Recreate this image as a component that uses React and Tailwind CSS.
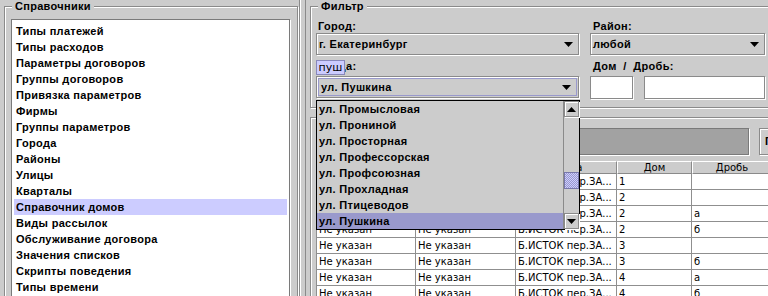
import React from 'react';

const etched = 'border border-[#8a8a8a] shadow-[inset_1px_1px_0_#ffffff,1px_1px_0_#ffffff]';
const bold = "font-bold font-['Liberation_Sans',sans-serif] text-[11px] tracking-[0.3px]";

const refs = [
  'Типы платежей',
  'Типы расходов',
  'Параметры договоров',
  'Группы договоров',
  'Привязка параметров',
  'Фирмы',
  'Группы параметров',
  'Города',
  'Районы',
  'Улицы',
  'Кварталы',
  'Справочник домов',
  'Виды рассылок',
  'Обслуживание договора',
  'Значения списков',
  'Скрипты поведения',
  'Типы времени',
];

const streets = [
  'ул. Промысловая',
  'ул. Прониной',
  'ул. Просторная',
  'ул. Профессорская',
  'ул. Профсоюзная',
  'ул. Прохладная',
  'ул. Птицеводов',
  'ул. Пушкина',
];

const houses = [
  ['1', ''],
  ['2', ''],
  ['2', 'а'],
  ['2', 'б'],
  ['3', ''],
  ['3', 'б'],
  ['4', 'а'],
  ['4', 'б'],
];

function Arrow({ up }) {
  return (
    <svg width="9" height="5" viewBox="0 0 9 5">
      {up ? <polygon points="0,5 9,5 4.5,0" fill="#000" /> : <polygon points="0,0 9,0 4.5,5" fill="#000" />}
    </svg>
  );
}

function Titled({ title, className, children }) {
  return (
    <div className={`relative ${etched} ${className}`}>
      <span className={`absolute -top-[8px] left-[7px] px-[3px] bg-[#cccccc] leading-[14px] ${bold}`}>{title}</span>
      {children}
    </div>
  );
}

function Combo({ text, focused }) {
  return (
    <div className={`h-[22px] ${etched} flex`}>
      <div className={`flex-1 flex items-center ${focused ? 'border border-[#9999cc] m-[1px]' : ''}`}>
        <div className={`flex-1 pl-[2px] ${bold}`}>{text}</div>
        <div className="w-[19px] flex justify-center">
          <Arrow />
        </div>
      </div>
    </div>
  );
}

function ScrollButton({ up }) {
  return (
    <div className={`h-[16px] w-[15px] ${etched} flex items-center justify-center`}>
      <Arrow up={up} />
    </div>
  );
}

export default function App() {
  return (
    <div className="w-[768px] h-[296px] overflow-hidden bg-[#cccccc] flex relative text-[10px] text-black font-['DejaVu_Sans',sans-serif]">
      {/* Справочники */}
      <div className="w-[298px] shrink-0 pl-[4px] pt-[6px]">
        <Titled title="Справочники" className="w-[294px] h-[310px] pt-[12px] pl-[6px] pr-[7px]">
          <div className="bg-white border border-[#7a7a7a] shadow-[1px_1px_0_#ffffff] h-[300px] pt-[3px] px-[2px]">
            {refs.map((r, i) => (
              <div key={r} className={`h-[16px] leading-[16px] px-[2px] ${bold} ${i === 11 ? 'bg-[#ccccff]' : ''}`}>
                {r}
              </div>
            ))}
          </div>
        </Titled>
      </div>

      {/* splitter */}
      <div className="w-[8px] shrink-0 flex">
        <div className="w-[2px] border-l border-[#8a8a8a] bg-white ml-[1px]" />
        <div className="flex-1" />
        <div className="w-[1px] bg-[#8a8a8a]" />
      </div>

      {/* right side */}
      <div className="flex-1 pt-[6px] flex flex-col">
        <Titled title="Фильтр" className="ml-[4px] w-[480px] h-[102px] shrink-0 pt-[13px] pl-[5px]">
          <div className="flex gap-[11px]">
            <div className="w-[263px] shrink-0">
              <div className={`h-[13px] leading-[13px] pl-[2px] ${bold}`}>Город:</div>
              <Combo text="г. Екатеринбург" />
              <div className={`h-[13px] leading-[13px] pl-[2px] mt-[5px] mb-[3px] ${bold}`}>Улица:</div>
              <Combo text="ул. Пушкина" focused />
            </div>
            <div className="w-[175px] shrink-0">
              <div className={`h-[13px] leading-[13px] pl-[3px] ${bold}`}>Район:</div>
              <Combo text="любой" />
              <div className={`h-[13px] leading-[13px] pl-[3px] mt-[5px] mb-[3px] whitespace-pre ${bold}`}>
                Дом  /  Дробь:
              </div>
              <div className="flex gap-[11px]">
                <div className={`w-[43px] shrink-0 h-[23px] bg-white ${etched}`} />
                <div className={`w-[121px] shrink-0 h-[23px] bg-white ${etched}`} />
              </div>
            </div>
          </div>
        </Titled>

        <div className={`ml-[4px] mt-[9px] w-[480px] h-[200px] shrink-0 ${etched} pt-[10px] pl-[5px]`}>
          <div className="flex">
            <div className="w-[433px] shrink-0 h-[27px] bg-[#a2a2a2] border border-[#7a7a7a] shadow-[1px_1px_0_#ffffff]" />
            <div className={`ml-[10px] w-[70px] shrink-0 h-[27px] ${etched} flex items-center pl-[5px] ${bold}`}>
              Поиск
            </div>
          </div>
          <div className="mt-[6px]">
            <div className="flex h-[13px] leading-[12px]">
              {[
                ['Город', 'w-[100px]'],
                ['Район', 'w-[100px]'],
                ['Улица', 'w-[101px]'],
                ['Дом', 'w-[75px]'],
                ['Дробь', 'w-[80px]'],
              ].map(([h, w]) => (
                <div
                  key={h}
                  className={`${w} shrink-0 text-center bg-[#cccccc] border-t border-l border-t-white border-l-white border-r border-b border-r-[#8a8a8a] border-b-[#8a8a8a]`}
                >
                  {h}
                </div>
              ))}
            </div>
            {houses.map(([d, f], i) => (
              <div key={i} className="flex h-[16px] leading-[15px] bg-white">
                <div className="w-[100px] shrink-0 border-l border-r border-b border-[#8f8f8f] px-[2px]">Не указан</div>
                <div className="w-[100px] shrink-0 border-r border-b border-[#8f8f8f] px-[2px]">Не указан</div>
                <div className="w-[101px] shrink-0 border-r border-b border-[#8f8f8f] px-[2px] whitespace-nowrap overflow-hidden">
                  Б.ИСТОК пер.ЗА...
                </div>
                <div className="w-[75px] shrink-0 border-r border-b border-[#8f8f8f] px-[2px]">{d}</div>
                <div className="w-[80px] shrink-0 border-r border-b border-[#8f8f8f] px-[2px]">{f}</div>
              </div>
            ))}
          </div>
        </div>
      </div>

      {/* tooltip */}
      <div className="absolute left-[316px] top-[60px] w-[29px] h-[15px] bg-[#ccccff] border border-[#8888bb] flex items-center justify-center leading-none text-[11px]">
        пуш
      </div>

      {/* popup list */}
      <div className="absolute left-[316px] top-[100px] w-[264px] h-[130px] border border-black bg-[#cccccc] flex">
        <div className="flex-1">
          {streets.map((s, i) => (
            <div key={s} className={`h-[16px] leading-[16px] pl-[2px] ${bold} ${i === 7 ? 'bg-[#9999cc]' : ''}`}>
              {s}
            </div>
          ))}
        </div>
        <div className="w-[16px] flex flex-col border-l border-[#8a8a8a]">
          <ScrollButton up />
          <div className="flex-1 flex flex-col">
            <div className="h-[55px]" />
            <div className="h-[17px] border border-[#7777aa] bg-[repeating-conic-gradient(#9999cc_0%_25%,#ccccff_0%_50%)] bg-size-[2px_2px]" />
          </div>
          <ScrollButton />
        </div>
      </div>
    </div>
  );
}
